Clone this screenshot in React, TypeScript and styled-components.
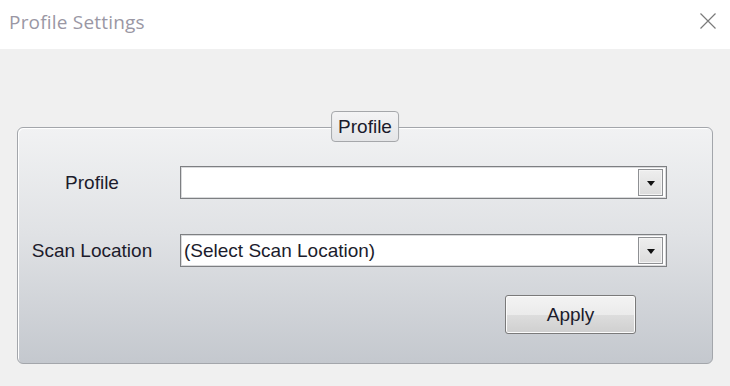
import React from 'react';
import styled, { createGlobalStyle } from 'styled-components';

const GlobalStyle = createGlobalStyle`
  html, body {
    margin: 0;
    padding: 0;
    background: #f0f0f0;
  }
  body {
    font-family: "Liberation Sans", Arial, sans-serif;
  }
`;

const Window = styled.div`
  width: 730px;
  height: 386px;
  display: flex;
  flex-direction: column;
  background: #f0f0f0;
  overflow: hidden;
`;

const TitleBar = styled.div`
  height: 49px;
  flex-shrink: 0;
  display: flex;
  align-items: center;
  justify-content: space-between;
  padding: 0 14px 0 9px;
  background: #ffffff;
`;

const Title = styled.div`
  font-family: "Open Sans", "Noto Sans", sans-serif;
  font-size: 19px;
  letter-spacing: 0.2px;
  color: #9a97a4;
  margin-top: -5px;
`;

const CloseButton = styled.div`
  width: 16px;
  height: 16px;
  margin-top: -8px;
  display: flex;
`;

const Body = styled.div`
  flex: 1;
  padding: 78px 17px 0 17px;
`;

const Group = styled.div`
  position: relative;
  height: 237px;
  border: 1px solid #a3a6ab;
  border-radius: 6px;
  background: linear-gradient(to bottom, #f1f2f3 0%, #e0e2e5 45%, #c4c8ce 100%);
  box-shadow: inset 1px 1px 0 #ffffff;
  padding: 38px 45px 0 0;
  box-sizing: border-box;
`;

const Legend = styled.div`
  position: absolute;
  top: -17px;
  left: 50%;
  transform: translateX(-50%);
  height: 29px;
  padding: 0 6px;
  display: flex;
  align-items: center;
  border: 1px solid #a5a7aa;
  border-radius: 4px;
  background: linear-gradient(to bottom, #f4f4f5, #e4e5e7);
  font-size: 19px;
  color: #1a1a2a;
`;

const Form = styled.div`
  display: grid;
  grid-template-columns: 148px 487px;
  column-gap: 14px;
  row-gap: 35px;
  align-items: center;
`;

const Label = styled.div`
  text-align: center;
  font-size: 19px;
  color: #1c1c2c;
`;

const Combo = styled.div`
  height: 33px;
  box-sizing: border-box;
  display: flex;
  align-items: center;
  justify-content: space-between;
  border: 1px solid #7d7f82;
  box-shadow: inset 0 0 0 1px #d9dadc;
  background: #ffffff;
  padding: 2px 3px 2px 3px;
`;

const ComboText = styled.span`
  font-size: 19px;
  color: #1c1c2c;
`;

const DropButton = styled.div`
  width: 25px;
  height: 27px;
  box-sizing: border-box;
  display: flex;
  align-items: center;
  justify-content: center;
  border: 1px solid #8e9093;
  box-shadow: inset 0 0 0 1px #f4f4f4;
  background: linear-gradient(to bottom, #eeeeee, #dcdcdc);
  padding-top: 2px;
`;

const Arrow = styled.div`
  width: 0;
  height: 0;
  border-left: 4px solid transparent;
  border-right: 4px solid transparent;
  border-top: 5px solid #111111;
`;

const Actions = styled.div`
  display: flex;
  justify-content: flex-end;
  margin-top: 28px;
  padding-right: 31px;
`;

const Button = styled.div`
  width: 131px;
  height: 39px;
  box-sizing: border-box;
  display: flex;
  align-items: center;
  justify-content: center;
  border: 1px solid #7a7a7a;
  border-radius: 3px;
  box-shadow: inset 0 0 0 1px #fbfbfb;
  background: linear-gradient(to bottom, #f3f3f3 0%, #ebebeb 50%, #dddddd 51%, #cfcfcf 100%);
  font-size: 19px;
  color: #1c1c2c;
`;

const Dropdown: React.FC<{ value?: string }> = ({ value }) => (
  <Combo>
    <ComboText>{value}</ComboText>
    <DropButton>
      <Arrow />
    </DropButton>
  </Combo>
);

const App: React.FC = () => {
  return (
    <>
      <GlobalStyle />
      <Window>
        <TitleBar>
          <Title>Profile Settings</Title>
          <CloseButton>
            <svg width="16" height="16" viewBox="0 0 16 16">
              <path d="M0.5 0.5 L15.5 15.5 M15.5 0.5 L0.5 15.5" stroke="#7a7a7a" strokeWidth="1.2" fill="none" />
            </svg>
          </CloseButton>
        </TitleBar>
        <Body>
          <Group>
            <Legend>Profile</Legend>
            <Form>
              <Label>Profile</Label>
              <Dropdown />
              <Label>Scan Location</Label>
              <Dropdown value="(Select Scan Location)" />
            </Form>
            <Actions>
              <Button>Apply</Button>
            </Actions>
          </Group>
        </Body>
      </Window>
    </>
  );
};

export default App;
